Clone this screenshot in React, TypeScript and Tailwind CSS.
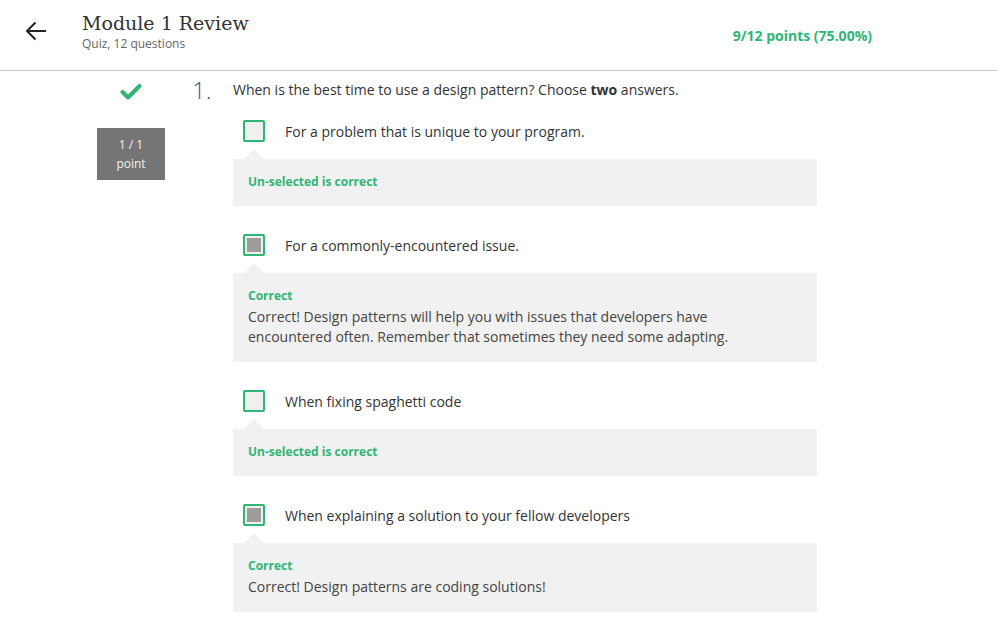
import React from 'react';

interface Option {
  text: string;
  checked: boolean;
  label: string;
  detail?: string;
}

const options: Option[] = [
  { text: 'For a problem that is unique to your program.', checked: false, label: 'Un-selected is correct' },
  {
    text: 'For a commonly-encountered issue.',
    checked: true,
    label: 'Correct',
    detail:
      'Correct! Design patterns will help you with issues that developers have encountered often. Remember that sometimes they need some adapting.',
  },
  { text: 'When fixing spaghetti code', checked: false, label: 'Un-selected is correct' },
  {
    text: 'When explaining a solution to your fellow developers',
    checked: true,
    label: 'Correct',
    detail: 'Correct! Design patterns are coding solutions!',
  },
];

function Checkbox({ checked }: { checked: boolean }) {
  return (
    <div className="w-[22px] h-[22px] border-2 border-[#2fb574] rounded-[2px] bg-[#f0f0f0] p-[2px] shrink-0">
      {checked && <div className="w-full h-full bg-[#9c9c9c]" />}
    </div>
  );
}

function AnswerOption({ option }: { option: Option }) {
  return (
    <div className="flex flex-col">
      <div className="flex items-center pl-[10px] h-[22px]">
        <Checkbox checked={option.checked} />
        <span className="ml-[20px] text-[14px] text-[#333]">{option.text}</span>
      </div>
      {/* feedback box with notch */}
      <div className="relative mt-[17px] bg-[#f1f1f1] pl-[15px] pr-[50px] pt-[14px] pb-[15px]">
        <div className="absolute top-[-10px] left-[11px] w-0 h-0 border-l-[10px] border-r-[10px] border-b-[10px] border-l-transparent border-r-transparent border-b-[#f1f1f1]" />
        <div className="text-[12px] leading-[18px] font-bold text-[#2fb574]">{option.label}</div>
        {option.detail && (
          <div className="mt-[2px] text-[14px] leading-5 text-[#444]">{option.detail}</div>
        )}
      </div>
    </div>
  );
}

export default function App() {
  return (
    <div className="w-[998px] h-[619px] bg-white overflow-hidden" style={{ fontFamily: '"Open Sans", "Noto Sans", sans-serif' }}>
      {/* Header */}
      <div className="h-[71px] flex items-center pl-[25px] pr-[126px] border-b border-[#c8c8c8]">
        <svg width="22" height="20" viewBox="0 0 22 20" className="shrink-0 mt-[-8px]">
          <path d="M21 10H2M10.5 1.5L2 10l8.5 8.5" fill="none" stroke="#222" strokeWidth="2" />
        </svg>
        <div className="ml-[35px] flex flex-col mt-[-7px]">
          <div className="text-[19px] leading-[24px] text-[#333]" style={{ fontFamily: '"DejaVu Serif", serif' }}>
            Module 1 Review
          </div>
          <div className="text-[12px] leading-[16px] text-[#666] mt-[1px]">Quiz, 12 questions</div>
        </div>
        <div className="flex-1" />
        <div className="text-[14px] font-bold text-[#2fb574]">9/12 points (75.00%)</div>
      </div>

      {/* Question */}
      <div className="flex pl-[97px] pt-[9px]">
        <div className="w-[68px] flex flex-col items-center">
          <svg width="22" height="16" viewBox="0 0 22 16" className="mt-[4px]">
            <path d="M2.5 8l5.5 5.5L19.5 2" fill="none" stroke="#2fb574" strokeWidth="4" strokeLinecap="round" strokeLinejoin="round" />
          </svg>
          <div className="mt-[28px] w-[68px] h-[52px] bg-[#757575] flex flex-col items-center justify-center text-[12px] leading-[19px] text-[#f2f2f2]">
            <span>1 / 1</span>
            <span>point</span>
          </div>
        </div>
        <div className="ml-[27px] w-[41px] text-[24px] leading-[20px] font-light text-[#3b5a78]">1.</div>
        <div className="w-[584px] flex flex-col">
          <div className="text-[14px] leading-5 text-[#333]">
            When is the best time to use a design pattern? Choose <b>two</b> answers.
          </div>
          <div className="mt-[20px] flex flex-col gap-[28px]">
            {options.map((o, i) => (
              <AnswerOption key={i} option={o} />
            ))}
          </div>
        </div>
      </div>
    </div>
  );
}
